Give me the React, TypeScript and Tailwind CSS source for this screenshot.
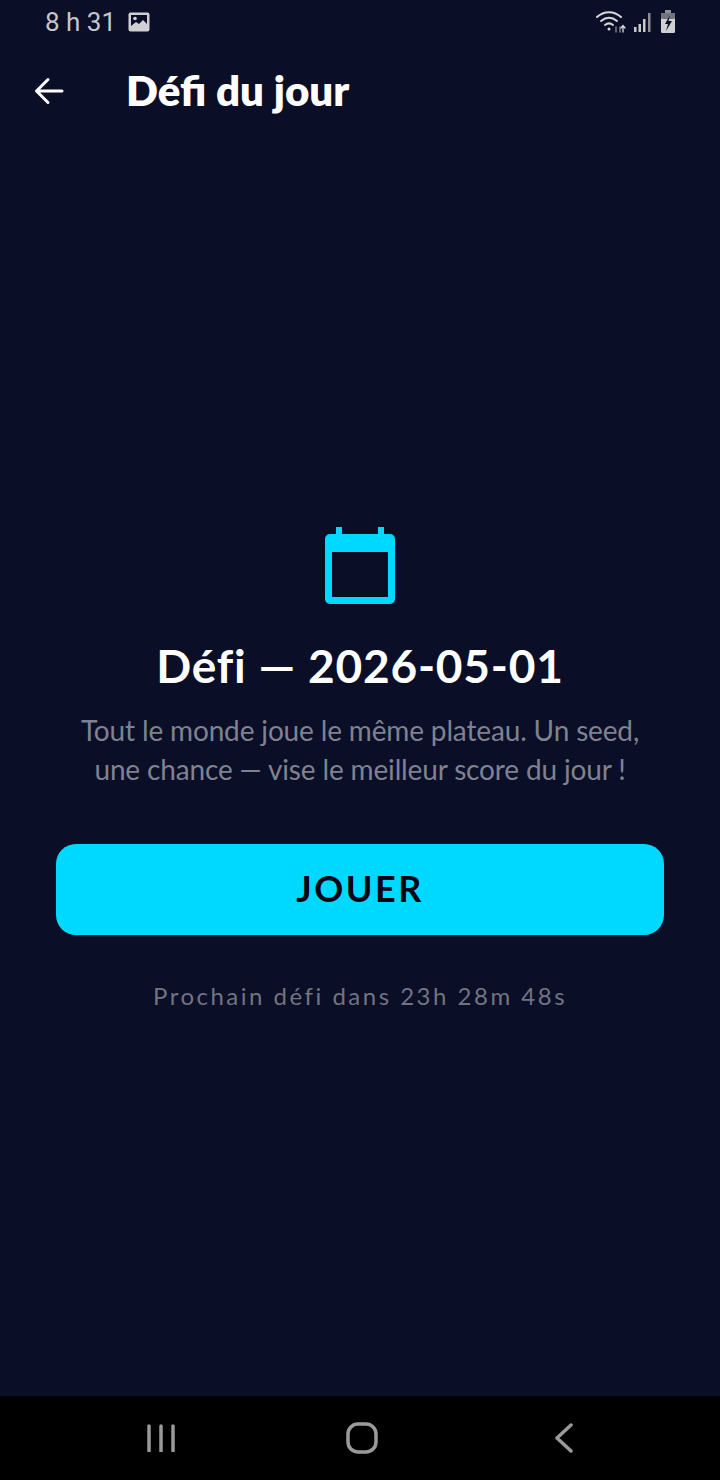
function StatusBar() {
  return (
    <div className="flex h-[44px] items-center justify-between pl-[45px] pr-[44px]">
      <div className="flex items-center gap-[12px]">
        <span className="font-['Roboto',sans-serif] text-[26px] leading-none text-[#c4c6cc]">8 h 31</span>
        <svg width="22" height="20" viewBox="0 0 22 20" fill="none">
          <rect x="0.5" y="0.5" width="21" height="19" rx="2" fill="#d0d0d4" />
          <rect x="3" y="3" width="16" height="11" fill="#0a0e27" />
          <circle cx="7" cy="6.5" r="1.8" fill="#d0d0d4" />
          <path d="M3 14l5-4 3 2 4-4 4 4v2H3z" fill="#d0d0d4" />
        </svg>
      </div>
      <div className="flex items-center gap-[7px]">
        <svg width="30" height="24" viewBox="0 0 30 24" fill="none" stroke="#d8d8dc" strokeWidth="2" strokeLinecap="round">
          <path d="M1 7c7-6.500 17-6.500 24 0" />
          <path d="M5 11c5-4 11-4 16 0" />
          <path d="M9 15c2.500-2 5.500-2 8 0" />
          <circle cx="13" cy="19" r="1.500" fill="#d8d8dc" stroke="none" />
          <path d="M20 17v5M24 22v-5" strokeWidth="1.300" stroke="#8d8f98" />
          <path d="M27 22v-6M25 18l2-2.500 2 2.500" strokeWidth="1.300" />
        </svg>
        <svg width="20" height="22" viewBox="0 0 20 22" fill="#c9c9ce">
          <rect x="1" y="16" width="2.500" height="5" />
          <rect x="5.500" y="13" width="2.500" height="8" />
          <rect x="10" y="8" width="2.500" height="13" />
          <rect x="15" y="2" width="2.500" height="19" fill="#8f9097" />
        </svg>
        <svg width="16" height="24" viewBox="0 0 16 24">
          <rect x="5" y="0" width="6" height="3" fill="#8f9097" />
          <rect x="1" y="3" width="14" height="20" rx="1.500" fill="#d0d0d4" />
          <rect x="1" y="3" width="14" height="6" rx="1.500" fill="#72747d" />
          <path d="M10 5l-5 9h3l-2 7 6-10H8.500z" fill="#0a0e27" />
        </svg>
      </div>
    </div>
  );
}

function NavBar() {
  return (
    <div className="flex h-[84px] items-center bg-black pl-[147px]">
      <svg width="28" height="28" viewBox="0 0 28 28" stroke="#9a9a9a" strokeWidth="3.500" strokeLinecap="round">
        <path d="M2 2v25M14 2v25M26 2v25" />
      </svg>
      <svg className="ml-[171px]" width="32" height="32" viewBox="0 0 32 32" fill="none" stroke="#9a9a9a" strokeWidth="3.500">
        <rect x="2" y="2" width="28" height="28" rx="10" />
      </svg>
      <svg className="ml-[177px]" width="18" height="30" viewBox="0 0 18 30" fill="none" stroke="#9a9a9a" strokeWidth="3.500" strokeLinecap="round" strokeLinejoin="round">
        <path d="M16 2L2 15l14 13" />
      </svg>
    </div>
  );
}

export default function App() {
  return (
    <div className="flex h-[1480px] w-[720px] flex-col bg-[#0a0e27] font-['Lato',sans-serif]">
      <StatusBar />

      <div className="flex h-[94px] items-center gap-[62px] pl-[34px] pb-[1px]">
        <svg width="30" height="28" viewBox="0 0 30 28" fill="none" stroke="#ffffff" strokeWidth="3" strokeLinecap="round" strokeLinejoin="round">
          <path d="M28 14H3M14 2.500L2.500 14 14 25.500" />
        </svg>
        <h1 className="pb-[2px] text-[42px] font-extrabold leading-none text-white">Défi du jour</h1>
      </div>

      <main className="flex flex-1 flex-col items-center pt-[389px]">
        <svg width="70" height="78" viewBox="0 0 70 78" fill="#00d9ff">
          <rect x="11" y="0" width="6" height="8" />
          <rect x="53" y="0" width="6" height="8" />
          <path
            fillRule="evenodd"
            d="M5 7h60a5 5 0 0 1 5 5v60a5 5 0 0 1-5 5H5a5 5 0 0 1-5-5V12a5 5 0 0 1 5-5zM7 25v45h56V25z"
          />
        </svg>
        <h2 className="mt-[34px] text-[46px] font-bold leading-[54px] tracking-[0.8px] text-white">Défi — 2026-05-01</h2>
        <p className="mt-[18px] text-center text-[28px] leading-[39px] tracking-[-0.15px] text-[#7f8290]">
          Tout le monde joue le même plateau. Un seed,
          <br />
          une chance — vise le meilleur score du jour !
        </p>
        <button className="mt-[55px] h-[91px] w-[608px] rounded-[20px] bg-[#00d9ff] pb-[3px] text-[36px] font-bold tracking-[2.500px] text-[#050714]">
          JOUER
        </button>
        <p className="mt-[46px] text-[24px] leading-[30px] tracking-[2.500px] text-[#717482]">Prochain défi dans 23h 28m 48s</p>
      </main>

      <NavBar />
    </div>
  );
}
